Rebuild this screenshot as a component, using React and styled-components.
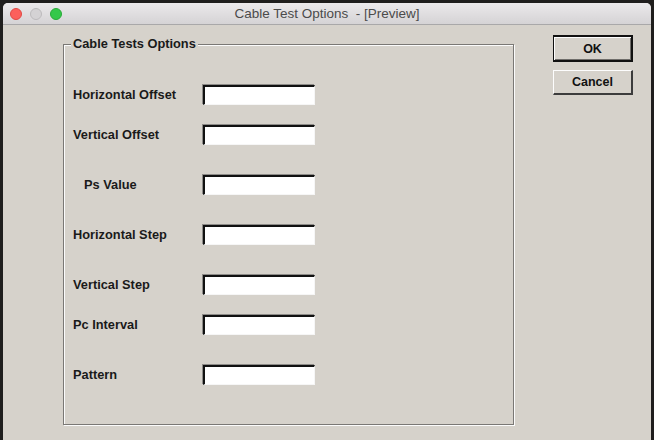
import React from "react";
import styled, { createGlobalStyle } from "styled-components";

const GlobalStyle = createGlobalStyle`
    html, body {
        margin: 0;
        padding: 0;
        background: #1f1e1d;
        height: 440px;
        overflow: hidden;
    }
`;

const Window = styled.div`
    margin: 3px 3px 0;
    height: 437px;
    border-radius: 5px 5px 0 0;
    overflow: hidden;
    background: #d6d2cb;
    display: flex;
    flex-direction: column;
    font-family: "Liberation Sans", Arial, sans-serif;
`;

const TitleBar = styled.div`
    position: relative;
    height: 21px;
    flex: none;
    display: flex;
    align-items: center;
    justify-content: center;
    background: linear-gradient(#ebe9eb, #d5d3d5);
    border-bottom: 1px solid #a9a8a9;
`;

const Lights = styled.div`
    position: absolute;
    left: 7px;
    top: 5px;
    display: flex;
    gap: 8px;
`;

const Light = styled.span`
    width: 12px;
    height: 12px;
    box-sizing: border-box;
    border-radius: 50%;
    background: ${(p) => p.color};
    border: 1px solid ${(p) => p.edge};
`;

const Title = styled.div`
    font-size: 13.5px;
    color: #4b4b4b;
    white-space: pre;
`;

const Body = styled.div`
    display: flex;
    align-items: flex-start;
    padding: 10px 0 0 60px;
`;

const Group = styled.fieldset`
    margin: 2px 0 0;
    width: 451px;
    box-sizing: border-box;
    padding: 34px 0 39px 9px;
    border: 1px solid #7a7875;
    box-shadow: 1px 1px 0 #fbfbfb, inset 1px 1px 0 #fbfbfb;
`;

const Legend = styled.legend`
    margin-left: -2px;
    padding: 0 2px;
    background: #d6d2cb;
    font-size: 12.8px;
    font-weight: bold;
    line-height: 14px;
    color: #1a1a1a;
`;

const Row = styled.div`
    display: grid;
    grid-template-columns: 130px 112px;
    align-items: center;
    margin-top: ${(p) => p.space}px;
`;

const Label = styled.label`
    padding-left: ${(p) => p.indent || 0}px;
    margin-bottom: 2px;
    font-size: 12.8px;
    font-weight: bold;
    color: #1a1a1a;
`;

const Field = styled.input`
    width: 112px;
    height: 20px;
    box-sizing: border-box;
    margin: 0;
    padding: 0 3px;
    background: #fff;
    border-style: solid;
    border-width: 2px 1px 1px 2px;
    border-color: #111 #f6f6f6 #f6f6f6 #111;
    box-shadow: -1px -1px 0 #8d8b88;
    outline: none;
    font-family: inherit;
    font-size: 12px;
`;

const Buttons = styled.div`
    display: flex;
    flex-direction: column;
    gap: 8px;
    margin-left: 39px;
`;

const Button = styled.button`
    width: 80px;
    height: ${(p) => (p.primary ? 27 : 25)}px;
    box-sizing: border-box;
    padding: 0;
    background: #d6d2cb;
    font-family: inherit;
    font-size: 12.5px;
    font-weight: bold;
    color: #111;
    border-style: solid;
    border-width: ${(p) => (p.primary ? "2px 2px 2px 1px" : "1px 2px 2px 1px")};
    border-color: ${(p) =>
        p.primary ? "#111 #111 #111 #111" : "#fdfdfd #3c3c3c #3c3c3c #fdfdfd"};
    box-shadow: ${(p) => (p.primary ? "inset 1px 1px 0 #fdfdfd, inset -1px -1px 0 #6f6d6a" : "none")};
`;

const rows = [
    { label: "Horizontal Offset", space: 0 },
    { label: "Vertical Offset", space: 20 },
    { label: "Ps Value", space: 30, indent: 11 },
    { label: "Horizontal Step", space: 30 },
    { label: "Vertical Step", space: 30 },
    { label: "Pc Interval", space: 20 },
    { label: "Pattern", space: 30 },
];

function App() {
    return (
        <>
            <GlobalStyle />
            <Window>
                <TitleBar>
                    <Lights>
                        <Light color="#fc605c" edge="#e04843" />
                        <Light color="#d4d2d4" edge="#bcbabc" />
                        <Light color="#34c84a" edge="#27aa37" />
                    </Lights>
                    <Title>Cable Test Options  - [Preview]</Title>
                </TitleBar>
                <Body>
                    <Group>
                        <Legend>Cable Tests Options</Legend>
                        {rows.map((r) => (
                            <Row key={r.label} space={r.space}>
                                <Label indent={r.indent}>{r.label}</Label>
                                <Field type="text" />
                            </Row>
                        ))}
                    </Group>
                    <Buttons>
                        <Button primary>OK</Button>
                        <Button>Cancel</Button>
                    </Buttons>
                </Body>
            </Window>
        </>
    );
}

export default App;
